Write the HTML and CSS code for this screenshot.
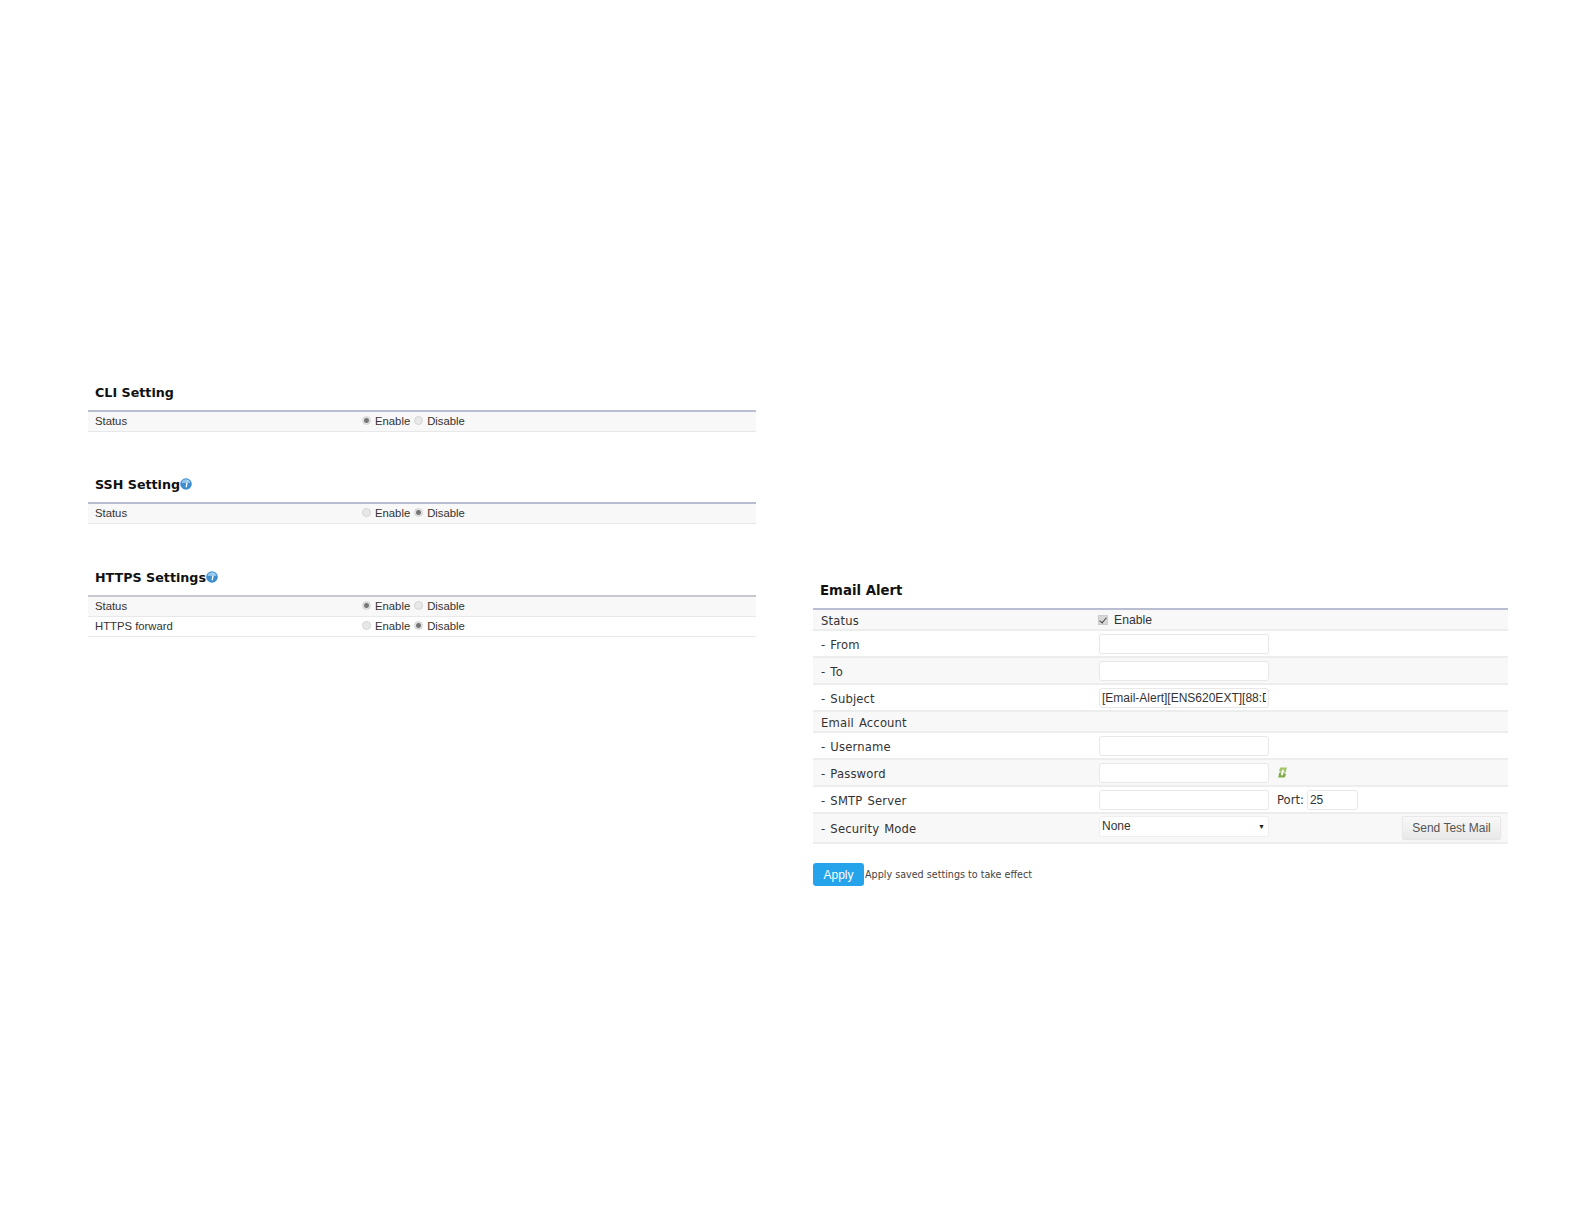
FILE: index.html
```html
<!DOCTYPE html>
<html lang="en">
<head>
<meta charset="utf-8">
<title>Settings</title>
<link rel="stylesheet" href="styles.css">
</head>
<body>
<main class="page">
  <div class="col col-left">
    <section class="panel">
      <h2 class="title">CLI Setting</h2>
      <div class="row"><span class="label">Status</span>
        <span class="value"><input class="radio" type="radio" name="cli" checked><label class="opt">Enable</label><input class="radio" type="radio" name="cli"><label class="opt">Disable</label></span></div>
    </section>
    <section class="panel">
      <h2 class="title">SSH Setting<svg class="info" viewBox="0 0 12 12"><circle cx="6" cy="6" r="5.8" fill="#3f8fcf"/><path d="M1.5 5a4.6 4.6 0 0 1 9 0z" fill="#8cc4ea"/><path d="M6.6 2.4h1.2v1.2H6.6zM6.2 4.8h1.4l-.7 4.4H5.6z" fill="#fff"/></svg></h2>
      <div class="row"><span class="label">Status</span>
        <span class="value"><input class="radio" type="radio" name="ssh"><label class="opt">Enable</label><input class="radio" type="radio" name="ssh" checked><label class="opt">Disable</label></span></div>
    </section>
    <section class="panel">
      <h2 class="title title-grey">HTTPS Settings<svg class="info" viewBox="0 0 12 12"><circle cx="6" cy="6" r="5.8" fill="#3f8fcf"/><path d="M1.5 5a4.6 4.6 0 0 1 9 0z" fill="#8cc4ea"/><path d="M6.6 2.4h1.2v1.2H6.6zM6.2 4.8h1.4l-.7 4.4H5.6z" fill="#fff"/></svg></h2>
      <div class="row"><span class="label">Status</span>
        <span class="value"><input class="radio" type="radio" name="https" checked><label class="opt">Enable</label><input class="radio" type="radio" name="https"><label class="opt">Disable</label></span></div>
      <div class="row row-plain"><span class="label">HTTPS forward</span>
        <span class="value"><input class="radio" type="radio" name="fwd"><label class="opt">Enable</label><input class="radio" type="radio" name="fwd" checked><label class="opt">Disable</label></span></div>
    </section>
  </div>
  <div class="col col-right">
    <section class="panel">
      <h2 class="title title-email">Email Alert</h2>
      <div class="erow erow-short shade"><span class="elabel">Status</span>
        <span class="evalue"><input class="check" type="checkbox" checked><span class="check-text">Enable</span></span></div>
      <div class="erow"><span class="elabel">- From</span><span class="evalue"><input class="field" type="text"></span></div>
      <div class="erow shade"><span class="elabel">- To</span><span class="evalue"><input class="field" type="text"></span></div>
      <div class="erow"><span class="elabel">- Subject</span><span class="evalue"><input class="field" type="text" value="[Email-Alert][ENS620EXT][88:DC:96:00:00:00]"></span></div>
      <div class="erow erow-short shade"><span class="elabel">Email Account</span></div>
      <div class="erow"><span class="elabel">- Username</span><span class="evalue"><input class="field" type="text"></span></div>
      <div class="erow shade"><span class="elabel">- Password</span><span class="evalue"><input class="field" type="text"><svg class="regen" viewBox="0 0 10 10"><path d="M3 .5h6L7.9 5H6l.5-2.5H4.6L4 5 1.8 3.3z" fill="#a3c566"/><path d="M7 9.5H1L2.1 5H4l-.5 2.5h1.9L6 5l2.2 1.7z" fill="#7fae4a"/></svg></span></div>
      <div class="erow"><span class="elabel">- SMTP Server</span><span class="evalue"><input class="field" type="text"><span class="port-label">Port:</span><input class="field field-port" type="text" value="25"></span></div>
      <div class="erow erow-tall shade"><span class="elabel">- Security Mode</span><span class="evalue"><span class="select">None<span class="caret">▼</span></span><button class="test-btn" type="button">Send Test Mail</button></span></div>
    </section>
    <div class="actions"><button class="apply" type="button">Apply</button><span class="apply-note">Apply saved settings to take effect</span></div>
  </div>
</main>
</body>
</html>
```
FILE: styles.css
```css
* { box-sizing: border-box; }
html, body { margin: 0; background: #fff; }
body { height: 1224px; overflow: hidden; color: #333; font-family: "Liberation Sans", Arial, sans-serif; font-size: 11.3px; }
.page { display: flex; align-items: flex-start; padding-left: 88px; }
.col-left { width: 668px; padding-top: 380px; }
.col-right { width: 695px; margin-left: 57px; padding-top: 578px; }
.panel { margin-bottom: 41px; }
.col-left .panel:first-child { margin-bottom: 40px; }
.col-right .panel { margin-bottom: 0; }
.title { margin: 0; height: 32px; padding: 0 7px 5px; font: bold 12.7px/28px "DejaVu Sans", Verdana, sans-serif; color: #111; border-bottom: 2px solid #b9bdd0; display: flex; align-items: center; }
.title-grey { border-bottom-color: #c6c8ce; }
.title-email { font-size: 13.3px; padding-bottom: 4px; }
.info { width: 12px; height: 12px; margin-bottom: 2px; }
.row { display: flex; align-items: center; height: 20px; background: #f8f8f8; border-bottom: 1px solid #e6e8ea; padding: 0 0 1px 7px; }
.row-plain { background: #fff; height: 20px; }
.label { width: 267px; }
.value { display: flex; align-items: center; }
.radio { appearance: none; width: 9px; height: 9px; margin: 0 4px 1px 0; border-radius: 50%; border: 1px solid #d4d4d4; background: #e8e8e8; }
.radio:checked { background: radial-gradient(circle, #777 0 2px, #e4e4e4 3px); }
.opt { margin-right: 4px; color: #333; }
.opt:last-child { margin-right: 0; }
.erow { display: flex; align-items: center; height: 27px; border-bottom: 2px solid #eceeee; padding-left: 8px; font-family: "DejaVu Sans", Verdana, sans-serif; font-size: 11.6px; }
.erow-short { height: 21px; }
.erow-tall { height: 30px; }
.shade { background: #f8f8f8; }
.elabel { width: 278px; flex: none; letter-spacing: .15px; word-spacing: 1.2px; padding-top: 2px; }
.evalue { display: flex; align-items: center; flex: 1; min-width: 0; padding-right: 7px; }
.check { appearance: none; width: 10px; height: 10px; margin: 0 6px 0 -1px; position: relative; background: #d8d8d8; border: 1px solid #ccc; }
.check:checked::after { content: ""; position: absolute; left: 2px; top: 0; width: 3px; height: 6px; border: solid #444; border-width: 0 1.5px 1.5px 0; transform: rotate(40deg); }
.check-text { font-family: "Liberation Sans", Arial, sans-serif; font-size: 12.2px; }
.field { width: 170px; height: 20px; padding: 0 2px; border: 1px solid #e8e8e8; border-radius: 3px; background: #fff; font: 12px "Liberation Sans", Arial, sans-serif; color: #333; outline: 0; }
.field-port { width: 51px; margin-left: 1px; }
.regen { width: 11px; height: 11px; margin-left: 8px; }
.port-label { margin: 0 2px 0 8px; }
.select { width: 170px; height: 21px; padding: 0 3px 0 2px; border: 1px solid #eee; border-radius: 3px; background: #fff; font: 12px/17px "Liberation Sans", Arial, sans-serif; display: flex; justify-content: space-between; align-items: center; margin-top: -4px; }
.caret { font-size: 7px; color: #222; }
.test-btn { margin-left: auto; width: 99px; height: 23px; border: 1px solid #e8e8e8; border-radius: 2px; background: linear-gradient(#f8f8f8, #e9e9e9); box-shadow: 0 1px 1px #e2e2e2; font: 12px "Liberation Sans", Arial, sans-serif; color: #555; padding: 0; margin-top: -1px; }
.actions { display: flex; align-items: center; margin-top: 19px; }
.apply { width: 51px; height: 23px; border: 0; border-radius: 3px; background: #25a4ec; color: #fff; font: 12px "Liberation Sans", Arial, sans-serif; padding: 0; }
.apply-note { font: 9.6px "DejaVu Sans", Verdana, sans-serif; color: #444; margin-left: 1px; }
```
